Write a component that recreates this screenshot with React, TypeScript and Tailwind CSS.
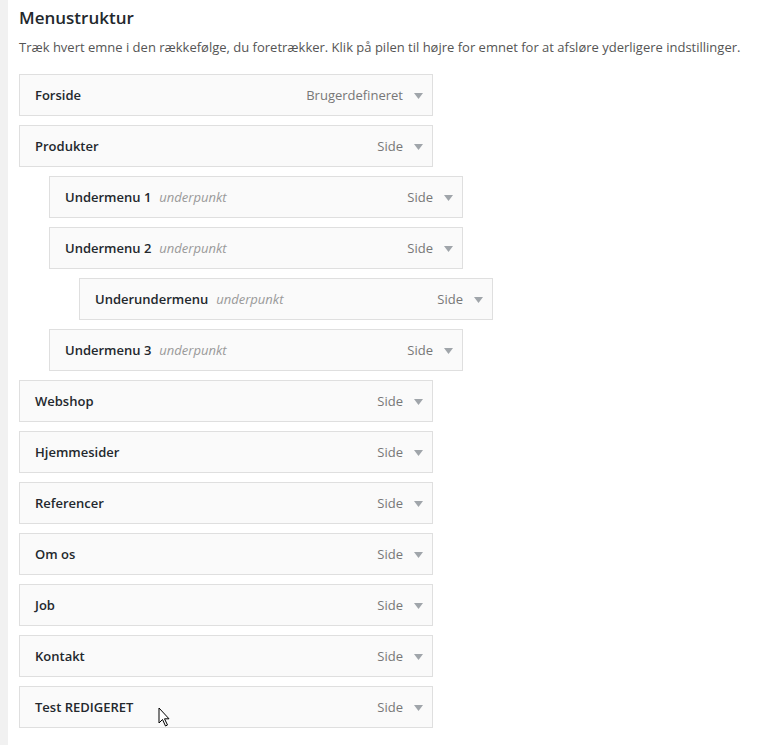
import React from "react";

type Item = { title: string; type: string; depth: number; sub?: boolean };

const items: Item[] = [
  { title: "Forside", type: "Brugerdefineret", depth: 0 },
  { title: "Produkter", type: "Side", depth: 0 },
  { title: "Undermenu 1", type: "Side", depth: 1, sub: true },
  { title: "Undermenu 2", type: "Side", depth: 1, sub: true },
  { title: "Underundermenu", type: "Side", depth: 2, sub: true },
  { title: "Undermenu 3", type: "Side", depth: 1, sub: true },
  { title: "Webshop", type: "Side", depth: 0 },
  { title: "Hjemmesider", type: "Side", depth: 0 },
  { title: "Referencer", type: "Side", depth: 0 },
  { title: "Om os", type: "Side", depth: 0 },
  { title: "Job", type: "Side", depth: 0 },
  { title: "Kontakt", type: "Side", depth: 0 },
  { title: "Test REDIGERET", type: "Side", depth: 0 },
];

const indent = ["ml-0", "ml-[30px]", "ml-[60px]"];

const MenuItem = ({ item, cursor }: { item: Item; cursor?: boolean }) => (
  <div
    className={`relative flex items-center h-[42px] w-[414px] border border-[#dfdfdf] bg-[#fafafa] pt-[2px] pl-[15px] pr-[8px] ${indent[item.depth]}`}
  >
    <span className="text-[13px] font-semibold text-[#23282d]">{item.title}</span>
    {item.sub && (
      <span className="ml-[8px] text-[13px] italic text-[#999]">underpunkt</span>
    )}
    <span className="ml-auto text-[13px] text-[#777]">{item.type}</span>
    <svg width="9" height="6" viewBox="0 0 9 6" className="ml-[11px] mr-[1px]">
      <path d="M0 0 H9 L4.5 6 Z" fill="#a0a5aa" />
    </svg>
    {cursor && (
      <svg
        width="14"
        height="21"
        viewBox="0 0 14 21"
        className="absolute left-[138px] top-[20px]"
      >
        <path
          d="M1 1 V16 L4.5 12.5 L7.5 19 L9.5 18 L6.5 11.8 L11 11.8 Z"
          fill="#fff"
          stroke="#000"
          strokeWidth="1"
          strokeLinejoin="round"
        />
      </svg>
    )}
  </div>
);

export default function App() {
  return (
    <div
      className="flex min-h-[745px] w-[770px] bg-white"
      style={{ fontFamily: '"Open Sans", sans-serif' }}
    >
      <div className="w-[8px] shrink-0 bg-[#f1f1f1]" />
      <div className="pl-[11px] pt-[6px]">
        <h3 className="text-[17px] font-semibold leading-[24px] text-[#23282d]">
          Menustruktur
        </h3>
        <p className="mt-[8px] text-[13px] leading-[18px] text-[#555]">
          Træk hvert emne i den rækkefølge, du foretrækker. Klik på pilen til højre for emnet for at afsløre yderligere indstillinger.
        </p>
        <div className="mt-[18px] flex flex-col gap-[9px]">
          {items.map((item, i) => (
            <MenuItem key={item.title} item={item} cursor={i === items.length - 1} />
          ))}
        </div>
      </div>
    </div>
  );
}
